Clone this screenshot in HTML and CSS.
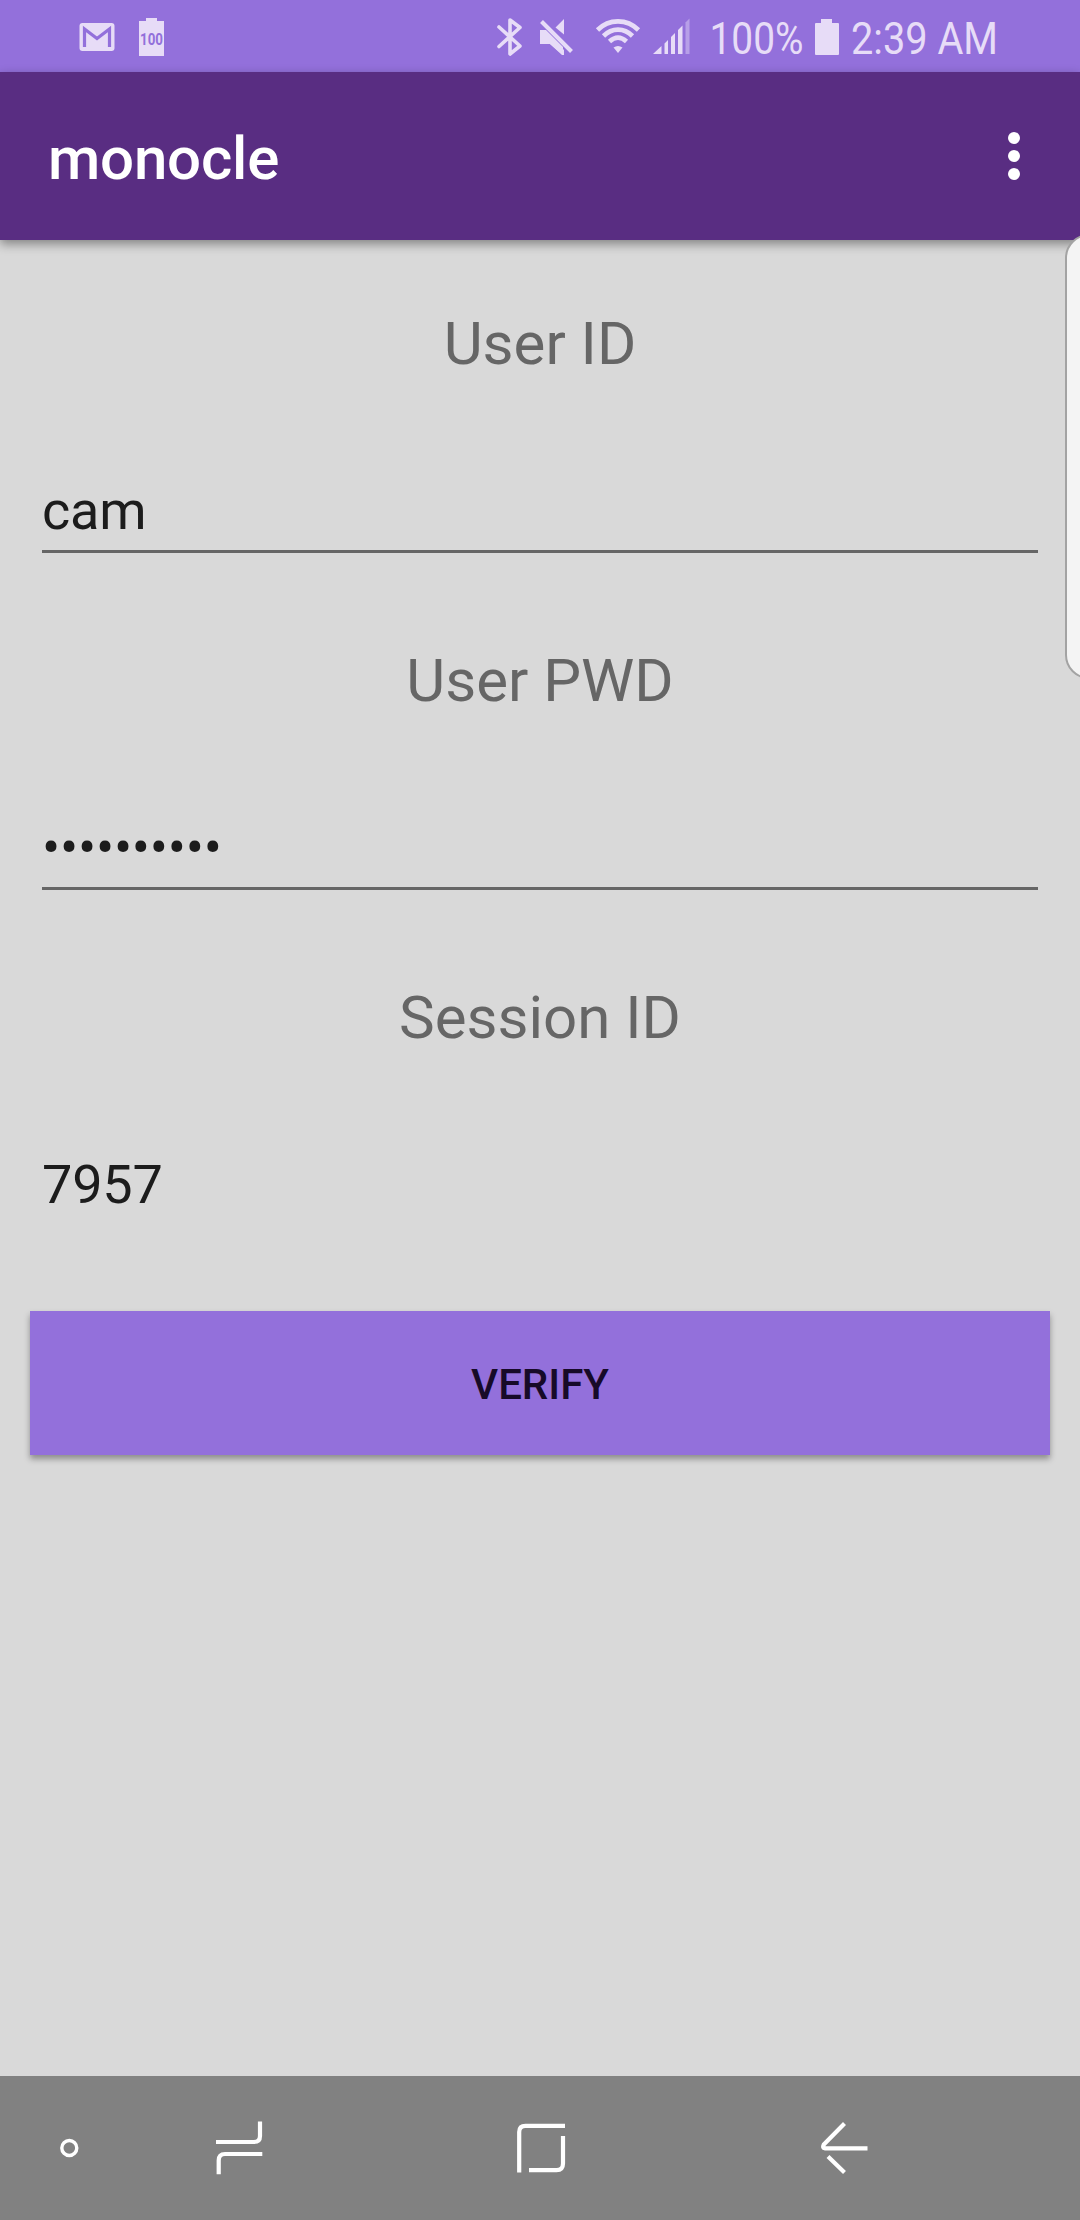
FILE: index.html
```html
<!DOCTYPE html>
<html lang="en">
<head>
<meta charset="utf-8">
<title>monocle</title>
<link rel="stylesheet" href="styles.css">
</head>
<body>
<div class="screen">
  <div class="status-bar">
    <div class="notifications">
      <svg width="36" height="72" viewBox="79 0 36 72">
        <rect class="fill" x="79.500" y="23" width="35" height="28" rx="3"/>
        <path class="cut" d="M84.500 47V29L97 38.500L109.500 29V47" stroke-width="3.200"/>
      </svg>
      <svg width="26" height="72" viewBox="139 0 26 72">
        <path class="fill" d="M139 21H146V18H157V21H164V56H139Z"/>
        <text class="battery-level" x="140" y="45" textLength="23" lengthAdjust="spacingAndGlyphs">100</text>
      </svg>
    </div>
    <div class="system">
      <svg width="26" height="72" viewBox="497 0 26 72">
        <path class="line" d="M499 27L520 46L510 54V20L520 27.500L499 46.500" stroke-width="3.600"/>
      </svg>
      <svg class="mute" width="34" height="72" viewBox="540 0 34 72">
        <path class="fill" d="M540 30H549L564 45V55H562L550 44H540Z M564 19V34.500L555.500 27.500Z"/>
        <path d="M541 21L572 52.500" stroke="#9370db" stroke-width="8"/>
        <path class="line flat" d="M541.500 21.500L571.500 51.500" stroke-width="4"/>
        <path class="fill" d="M540 30H546L563 47V55L550 44H540Z"/>
      </svg>
      <svg class="wifi" width="46" height="72" viewBox="595 0 46 72">
        <path class="line flat" d="M597.500 30C609 18.500 627 18.500 638.500 30M603.500 36C612 27.500 624 27.500 632.500 36M609.500 41.500C615 36.500 621 36.500 626.500 41.500" stroke-width="4.600"/>
        <path class="fill" d="M613.500 47.500Q618 44.500 622.500 47.500L618 53Z"/>
      </svg>
      <svg class="signal" width="38" height="72" viewBox="653 0 38 72">
        <path class="fill" d="M653 54L661.500 46V54ZM664.500 43.500L668 40V54H664.500ZM671 37L675 33V54H671ZM678 30L682.500 25.500V54H678Z"/>
        <path d="M685.500 22.500L689.500 18.500V54H685.500Z" fill="#b79fe8"/>
      </svg>
      <svg class="percent" width="96" height="72" viewBox="709 0 96 72">
        <text class="status-text" x="709.500" y="54" textLength="94" lengthAdjust="spacingAndGlyphs">100%</text>
      </svg>
      <svg class="charge" width="24" height="72" viewBox="815 0 24 72">
        <path class="fill" d="M816 23H821V19H832V23H838Q839 23 839 24V54Q839 55 838 55H816Q815 55 815 54V24Q815 23 816 23Z"/>
      </svg>
      <svg class="clock" width="150" height="72" viewBox="850 0 150 72">
        <text class="status-text" x="851" y="54" textLength="147" lengthAdjust="spacingAndGlyphs">2:39 AM</text>
      </svg>
    </div>
  </div>

  <header class="app-bar">
    <h1 class="title">monocle</h1>
    <div class="overflow"><i class="dot"></i><i class="dot"></i><i class="dot"></i></div>
  </header>

  <main class="form">
    <div class="field">
      <div class="label">User ID</div>
      <div class="value underlined">cam</div>
    </div>
    <div class="field">
      <div class="label">User PWD</div>
      <div class="value password underlined">••••••••••</div>
    </div>
    <div class="field">
      <div class="label">Session ID</div>
      <div class="value">7957</div>
    </div>
    <button class="verify">VERIFY</button>
  </main>

  <nav class="nav-bar">
    <svg width="20" height="144" viewBox="59 0 20 144">
      <circle class="nav-line" cx="69.300" cy="72" r="7.500" stroke-width="3.400"/>
    </svg>
    <svg class="recents" width="48" height="144" viewBox="215 0 48 144">
      <path class="nav-line" d="M216 66H254Q260 66 260 60V45.500M262.300 78H225Q218.700 78 218.700 84.500V98.300" stroke-width="4.200"/>
    </svg>
    <svg class="home" width="50" height="144" viewBox="516 0 50 144">
      <path class="nav-line" d="M519.200 96.500V56Q519.200 49.800 525.500 49.800H565M563 60V87.500Q563 94.200 556.500 94.200H529" stroke-width="4.200"/>
    </svg>
    <svg class="back" width="48" height="144" viewBox="820 0 48 144">
      <path class="nav-line" d="M844.500 47.500L823.800 68.500Q822 72.300 825 72.300H867.500M828 80.500L844.500 96.500" stroke-width="4.200"/>
    </svg>
  </nav>
  <div class="edge-panel"></div>
</div>
</body>
</html>
```
FILE: styles.css
```css
* { box-sizing: border-box; }

body {
  margin: 0;
  font-family: Roboto, sans-serif;
}

.screen {
  position: relative;
  display: flex;
  flex-direction: column;
  width: 1080px;
  height: 2220px;
  overflow: hidden;
  background: #d9d9d9;
}

svg { display: block; flex: none; overflow: visible; }

/* Status bar */
.status-bar {
  display: flex;
  justify-content: space-between;
  flex: none;
  height: 72px;
  padding: 0 80px 0 79px;
  background: #9370db;
}
.notifications { display: flex; gap: 24px; }
.system { display: flex; }
.fill { fill: #e7dcf7; }
.line { fill: none; stroke: #e7dcf7; stroke-linejoin: round; stroke-linecap: round; }
.flat { stroke-linecap: butt; }
.cut { fill: none; stroke: #9370db; }
.battery-level { font-size: 16px; font-weight: 700; fill: #9370db; }
.status-text { font-size: 45px; fill: #e7dcf7; }
.mute { margin-left: 17px; }
.wifi { margin-left: 21px; }
.signal { margin-left: 12px; }
.percent { margin-left: 18px; }
.charge { margin-left: 10px; }
.clock { margin-left: 11px; }

/* App bar */
.app-bar {
  display: flex;
  align-items: center;
  justify-content: space-between;
  flex: none;
  height: 168px;
  padding: 0 60px 0 48px;
  background: #592d82;
  box-shadow: 0 4px 10px rgba(0, 0, 0, 0.4);
}
.title {
  margin: 5px 0 0;
  font-size: 60px;
  font-weight: 500;
  line-height: 70px;
  letter-spacing: -0.2px;
  color: #fff;
}
.overflow { display: flex; flex-direction: column; gap: 6px; }
.dot { width: 12px; height: 12px; border-radius: 50%; background: #fff; }

/* Form */
.form {
  display: flex;
  flex-direction: column;
  flex: 1;
}
.field { height: 337px; padding: 69px 42px 0; }
.label {
  margin-bottom: 100px;
  font-size: 60px;
  line-height: 70px;
  text-align: center;
  color: #666;
}
.value {
  height: 74px;
  font-size: 54px;
  line-height: 63px;
  letter-spacing: -0.2px;
  color: #1c1c1c;
}
.password { letter-spacing: -0.25px; }
.underlined { border-bottom: 3px solid #666; }
.verify {
  height: 144px;
  margin: 60px 30px 0;
  padding: 3px 0 0;
  border: 0;
  background: #9370db;
  box-shadow: 0 4px 6px rgba(0, 0, 0, 0.35);
  font: 500 42px/50px Roboto, sans-serif;
  color: #170a28;
}

/* Navigation bar */
.nav-bar {
  display: flex;
  flex: none;
  height: 144px;
  padding-left: 59px;
  background: #818181;
}
.nav-line { fill: none; stroke: #fff; }
.recents { margin-left: 136px; }
.home { margin-left: 253px; }
.back { margin-left: 254px; }

/* Edge handle overlapping the right side of the screen */
.edge-panel {
  position: absolute;
  top: 234px;
  left: 1065px;
  width: 60px;
  height: 445px;
  border: 2px solid #a3a3a3;
  border-radius: 24px;
  background: #f4f4f4;
}
```
